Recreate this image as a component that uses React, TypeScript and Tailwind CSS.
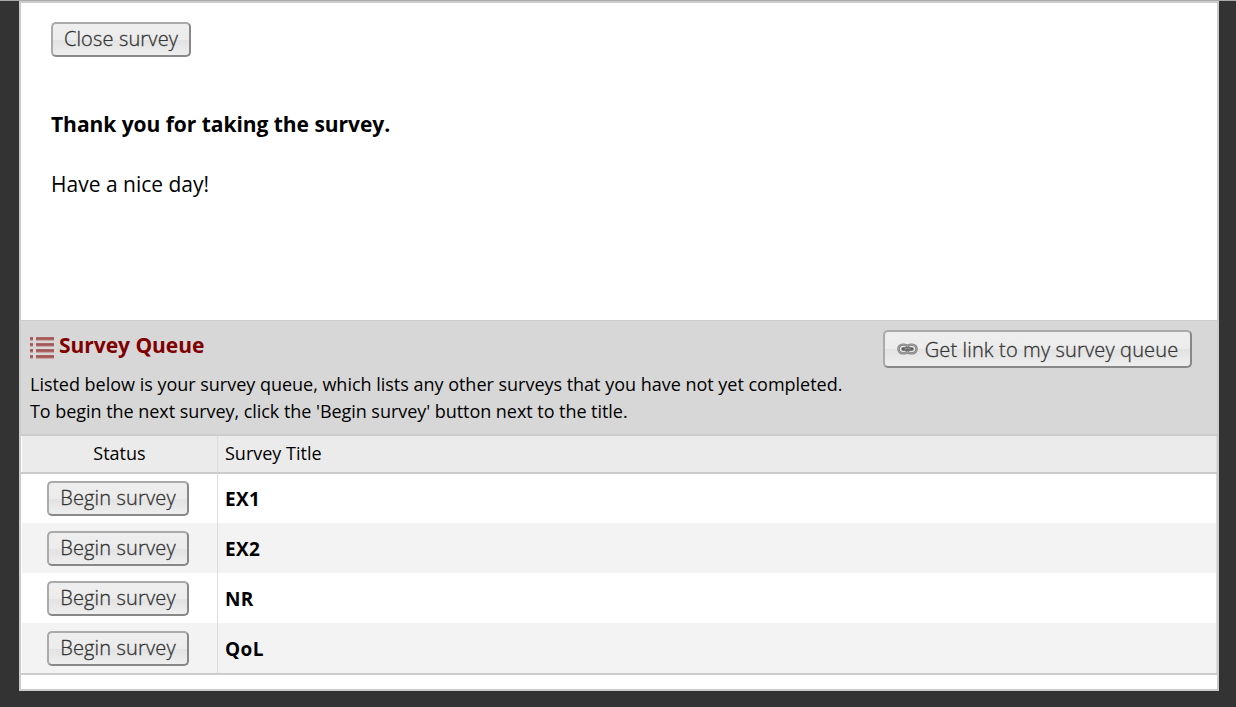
const surveys = ["EX1", "EX2", "NR", "QoL"];

const buttonBase =
  "box-border flex shrink-0 items-center justify-center whitespace-nowrap rounded-[5px] border-2 border-t-[#aaa] border-l-[#aaa] border-r-[#888] border-b-[#888] bg-[linear-gradient(to_bottom,#eeeeee_0%,#ececec_50%,#e2e2e2_51%,#eeeeee_100%)] text-[20px] leading-[30px] font-light tracking-[0.15px] text-[#333] [-webkit-text-stroke:0.3px_#333]";

function ListIcon() {
  return (
    <svg width="24" height="22" viewBox="0 0 24 22" shapeRendering="crispEdges">
      {[0, 6, 12, 18].map((y) => (
        <g key={y}>
          <rect x="0" y={y} width="3" height="3" fill="#ad6666" />
          <rect x="6" y={y} width="18" height="3" fill="#ad6666" />
          <rect x="0" y={y + 1} width="3" height="1" fill="#a05454" />
          <rect x="6" y={y + 1} width="18" height="1" fill="#a05454" />
          <rect x="0" y={y + 3} width="3" height="1" fill="#c9a5a5" />
          <rect x="6" y={y + 3} width="18" height="1" fill="#c9a5a5" />
        </g>
      ))}
    </svg>
  );
}

function ChainIcon() {
  return (
    <svg width="21" height="12" viewBox="0 0 21 12" fill="none">
      <rect x="1.5" y="1.8" width="10" height="8.4" rx="4.2" stroke="#858585" strokeWidth="2.6" />
      <rect x="9.5" y="1.8" width="10" height="8.4" rx="4.2" stroke="#858585" strokeWidth="2.6" />
      <rect x="1.5" y="1.8" width="10" height="8.4" rx="4.2" stroke="#aaa" strokeWidth=".8" />
      <rect x="9.5" y="1.8" width="10" height="8.4" rx="4.2" stroke="#aaa" strokeWidth=".8" />
      <path d="M6 6h9" stroke="#5c5c5c" strokeWidth="3.4" strokeLinecap="round" />
      <path d="M7.5 5.8h6" stroke="#999" strokeWidth="1.2" />
    </svg>
  );
}

export default function App() {
  return (
    <div className="h-[707px] w-[1236px] overflow-hidden border-t border-[#aaa] bg-[#333] pr-[17px] pl-[19px] font-['Open_Sans','Noto_Sans',sans-serif] text-black">
      <main className="flex h-[690px] flex-col border-2 border-[#ccc] bg-white">
        <section className="h-[317px] shrink-0 px-[30px] pt-[19px]">
          <button className={`${buttonBase} h-[35px] w-[140px] pb-[2px]`}>
            <span>Close survey</span>
          </button>
          <p className="mt-[52px] text-[21px] leading-[30px] font-bold tracking-[-0.04px]">
            <span>Thank you for taking the survey.</span>
          </p>
          <p className="mt-[30px] text-[21px] leading-[30px]">
            <span>Have a nice day!</span>
          </p>
        </section>

        <section className="flex h-[116px] shrink-0 items-start justify-between border-t border-b-2 border-[#ccc] bg-[#d7d7d7] pr-[25px] pl-[9px]">
          <div>
            <h2 className="flex h-[50px] items-start gap-[5px] pt-[9px] text-[21px] leading-[30px] font-bold tracking-[-0.04px] text-[#800000]">
              <span className="mt-[7px]">
                <ListIcon />
              </span>
              <span>Survey Queue</span>
            </h2>
            <p className="text-[18px] leading-[27px] whitespace-nowrap">
              <span className="tracking-[-0.015px]">Listed below is your survey queue, which lists any other surveys that you have not yet completed.</span>
              <br />
              <span className="tracking-[-0.045px]">To begin the next survey, click the 'Begin survey' button next to the title.</span>
            </p>
          </div>
          <button className={`${buttonBase} mt-[9px] h-[38px] w-[309px] gap-[7px]`}>
            <ChainIcon />
            <span className="pt-[2px]">Get link to my survey queue</span>
          </button>
        </section>

        <div className="flex h-[38px] shrink-0 border-b-2 border-[#ccc] pl-px text-[18px] leading-[34px]">
          <div className="flex flex-1 border-r border-[#ddd] bg-[#ebebeb]">
            <div className="w-[196px] border-r border-[#ddd] text-center">Status</div>
            <div className="pl-[7px]">Survey Title</div>
          </div>
        </div>

        <div className="shrink-0 border-b-2 border-[#ccc]">
          <div className="ml-px border-r border-[#ddd]">
            {surveys.map((title, i) => (
              <div
                key={title}
                className={`flex ${i === 0 ? "h-[49px]" : "h-[50px]"} ${i % 2 ? "bg-[#f3f3f3]" : "bg-white"}`}
              >
                <div className={`w-[196px] border-r border-[#ddd] pl-[25px] ${i === 0 ? "pt-[7px]" : "pt-[8px]"}`}>
                  <button className={`${buttonBase} h-[35px] w-[142px] pb-[2px]`}>
                    <span>Begin survey</span>
                  </button>
                </div>
                <div className={`pl-[7px] text-[19px] leading-[30px] font-bold tracking-[0.4px] ${i === 0 ? "pt-[10px]" : "pt-[11px]"}`}>
                  <span>{title}</span>
                </div>
              </div>
            ))}
          </div>
        </div>
      </main>
    </div>
  );
}
